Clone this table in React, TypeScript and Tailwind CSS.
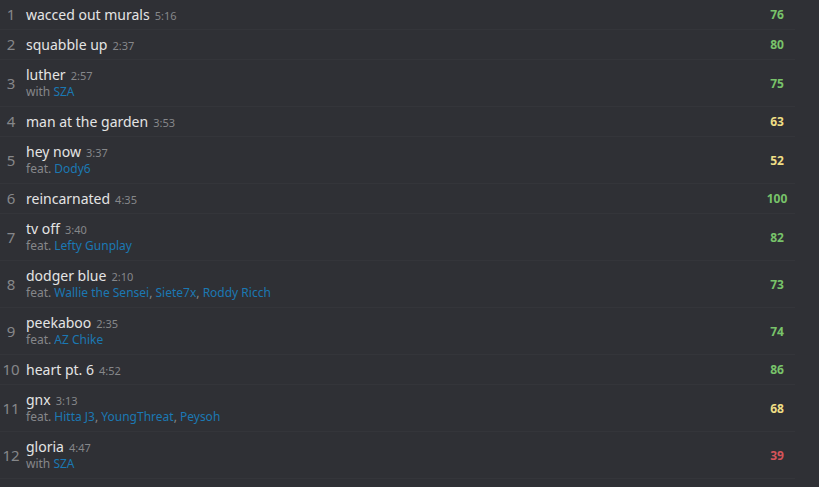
const tracks = [
  { n: 1, title: 'wacced out murals', time: '5:16', score: 76 },
  { n: 2, title: 'squabble up', time: '2:37', score: 80 },
  { n: 3, title: 'luther', time: '2:57', score: 75, prefix: 'with', artists: ['SZA'] },
  { n: 4, title: 'man at the garden', time: '3:53', score: 63 },
  { n: 5, title: 'hey now', time: '3:37', score: 52, prefix: 'feat.', artists: ['Dody6'] },
  { n: 6, title: 'reincarnated', time: '4:35', score: 100 },
  { n: 7, title: 'tv off', time: '3:40', score: 82, prefix: 'feat.', artists: ['Lefty Gunplay'] },
  { n: 8, title: 'dodger blue', time: '2:10', score: 73, prefix: 'feat.', artists: ['Wallie the Sensei', 'Siete7x', 'Roddy Ricch'] },
  { n: 9, title: 'peekaboo', time: '2:35', score: 74, prefix: 'feat.', artists: ['AZ Chike'] },
  { n: 10, title: 'heart pt. 6', time: '4:52', score: 86 },
  { n: 11, title: 'gnx', time: '3:13', score: 68, prefix: 'feat.', artists: ['Hitta J3', 'YoungThreat', 'Peysoh'] },
  { n: 12, title: 'gloria', time: '4:47', score: 39, prefix: 'with', artists: ['SZA'] },
];

const scoreColor = (s: number) =>
  s >= 70 ? 'text-[#78c36a]' : s >= 50 ? 'text-[#efde85]' : 'text-[#d4545a]';

export default function App() {
  return (
    <div className="min-h-[487px] bg-[#2f3035] font-['Noto_Sans',sans-serif]">
      <div className="w-[795px]">
        {tracks.map((t) => (
          <div key={t.n} className="flex items-center border-b border-[#34353a] py-[6px]">
            <div className="w-[22px] text-center text-[15px] leading-[17px] text-[#86878a]">{t.n}</div>
            <div className="ml-[4px] flex-1">
              <div className="h-[17px] whitespace-nowrap text-[14px] leading-[17px] text-[#e4e4e4]">
                {t.title}
                <span className="ml-[5px] text-[11px] text-[#86878a]">{t.time}</span>
              </div>
              {t.artists && (
                <div className="h-[17px] text-[12px] leading-[17px] text-[#86878a]">
                  {t.prefix}{' '}
                  {t.artists.map((a, i) => (
                    <span key={a}>
                      <span className="text-[#1b78b3]">{a}</span>
                      {i < t.artists!.length - 1 && ', '}
                    </span>
                  ))}
                </div>
              )}
            </div>
            <div className={`w-[36px] text-center text-[12px] font-bold leading-[17px] ${scoreColor(t.score)}`}>
              {t.score}
            </div>
          </div>
        ))}
      </div>
    </div>
  );
}
